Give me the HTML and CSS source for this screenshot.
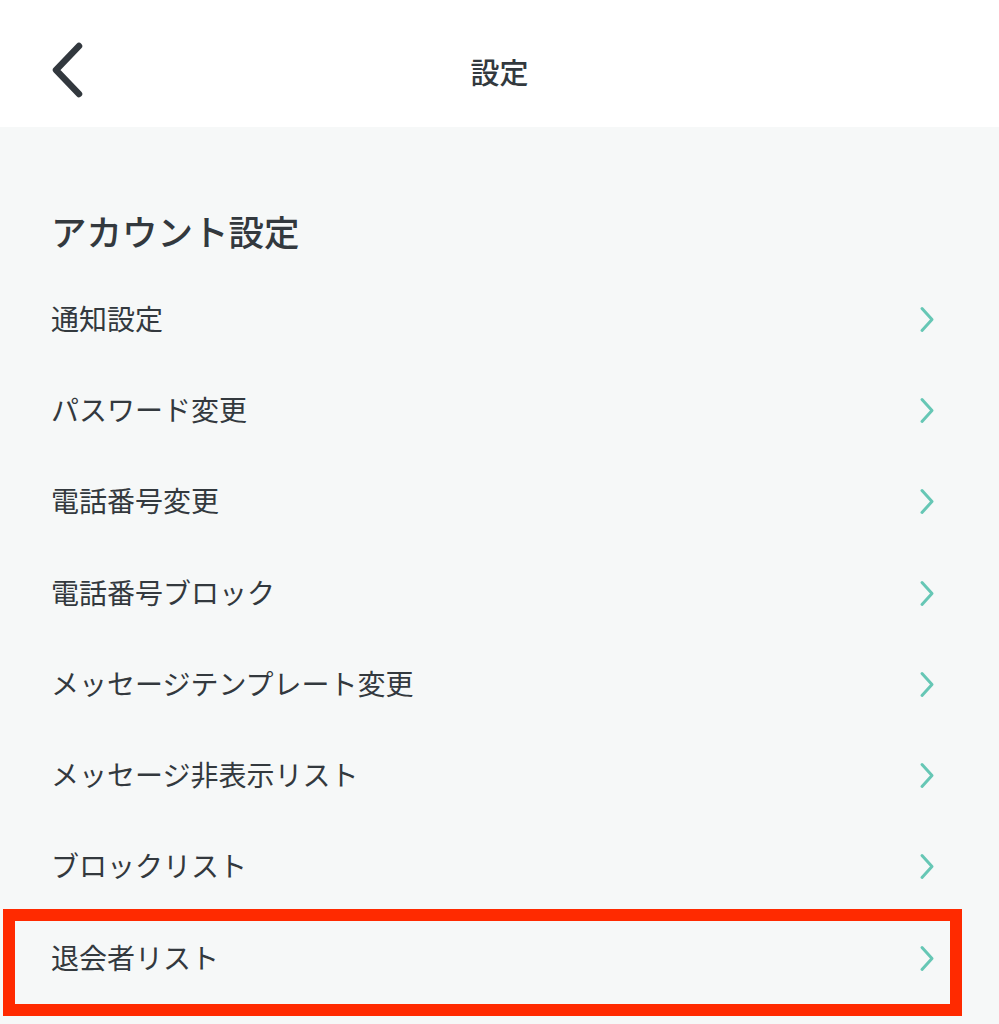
FILE: index.html
```html
<!DOCTYPE html>
<html lang="ja">
<head>
<meta charset="utf-8">
<title>設定</title>
<link rel="stylesheet" href="styles.css">
</head>
<body>
<header class="topbar">
  <div class="back">
    <svg width="40" height="60" viewBox="0 0 40 60"><path d="M29 6 L6 30 L29 54" fill="none" stroke="#32383e" stroke-width="6.5" stroke-linecap="round" stroke-linejoin="round"/></svg>
  </div>
  <h1 class="title">設定</h1>
  <div></div>
</header>
<main class="content">
  <h2 class="section-title">アカウント設定</h2>
  <ul class="list">
    <li class="row"><span>通知設定</span><svg class="chev" width="16" height="27" viewBox="0 0 16 27"><path d="M3 2.5 L13 13.5 L3 24.5" fill="none" stroke="#66c7b5" stroke-width="3" stroke-linecap="round" stroke-linejoin="round"/></svg></li>
    <li class="row"><span>パスワード変更</span><svg class="chev" width="16" height="27" viewBox="0 0 16 27"><path d="M3 2.5 L13 13.5 L3 24.5" fill="none" stroke="#66c7b5" stroke-width="3" stroke-linecap="round" stroke-linejoin="round"/></svg></li>
    <li class="row"><span>電話番号変更</span><svg class="chev" width="16" height="27" viewBox="0 0 16 27"><path d="M3 2.5 L13 13.5 L3 24.5" fill="none" stroke="#66c7b5" stroke-width="3" stroke-linecap="round" stroke-linejoin="round"/></svg></li>
    <li class="row"><span>電話番号ブロック</span><svg class="chev" width="16" height="27" viewBox="0 0 16 27"><path d="M3 2.5 L13 13.5 L3 24.5" fill="none" stroke="#66c7b5" stroke-width="3" stroke-linecap="round" stroke-linejoin="round"/></svg></li>
    <li class="row"><span>メッセージテンプレート変更</span><svg class="chev" width="16" height="27" viewBox="0 0 16 27"><path d="M3 2.5 L13 13.5 L3 24.5" fill="none" stroke="#66c7b5" stroke-width="3" stroke-linecap="round" stroke-linejoin="round"/></svg></li>
    <li class="row"><span>メッセージ非表示リスト</span><svg class="chev" width="16" height="27" viewBox="0 0 16 27"><path d="M3 2.5 L13 13.5 L3 24.5" fill="none" stroke="#66c7b5" stroke-width="3" stroke-linecap="round" stroke-linejoin="round"/></svg></li>
    <li class="row"><span>ブロックリスト</span><svg class="chev" width="16" height="27" viewBox="0 0 16 27"><path d="M3 2.5 L13 13.5 L3 24.5" fill="none" stroke="#66c7b5" stroke-width="3" stroke-linecap="round" stroke-linejoin="round"/></svg></li>
    <li class="row row-highlight"><span>退会者リスト</span><svg class="chev" width="16" height="27" viewBox="0 0 16 27"><path d="M3 2.5 L13 13.5 L3 24.5" fill="none" stroke="#66c7b5" stroke-width="3" stroke-linecap="round" stroke-linejoin="round"/></svg></li>
  </ul>
</main>
</body>
</html>
```
FILE: styles.css
```css
*, *::before, *::after { box-sizing: border-box; }
html, body {
  margin: 0;
  padding: 0;
}
body {
  width: 999px;
  min-height: 1024px;
  background: #f6f8f8;
  font-family: "Noto Sans CJK JP", "Noto Sans", sans-serif;
  color: #33393e;
  overflow: hidden;
}
.topbar {
  height: 127px;
  padding-top: 14px;
  background: #ffffff;
  display: grid;
  grid-template-columns: 1fr auto 1fr;
  align-items: center;
}
.back {
  padding-left: 50px;
  display: flex;
  align-items: center;
  padding-bottom: 2px;
}
.title {
  margin: 0;
  font-size: 29px;
  font-weight: 500;
  line-height: 40px;
  color: #33393e;
}
.content {
  padding-top: 78px;
}
.section-title {
  margin: 0 0 16.5px 0;
  padding-left: 51px;
  font-size: 35.5px;
  font-weight: 500;
  line-height: 52px;
  color: #33393e;
}
.list {
  list-style: none;
  margin: 0;
  padding: 0;
}
.row {
  position: relative;
  height: 91.3px;
  display: flex;
  align-items: center;
  justify-content: space-between;
  padding-left: 51px;
  padding-right: 64px;
  font-size: 28px;
  font-weight: 400;
  line-height: 40px;
}
.row span { padding-bottom: 3px; }
.chev { display: block; }
.row-highlight::after {
  content: "";
  position: absolute;
  left: 3px;
  top: -4px;
  width: 959px;
  height: 107px;
  border: 12px solid #ff2a00;
}
```
